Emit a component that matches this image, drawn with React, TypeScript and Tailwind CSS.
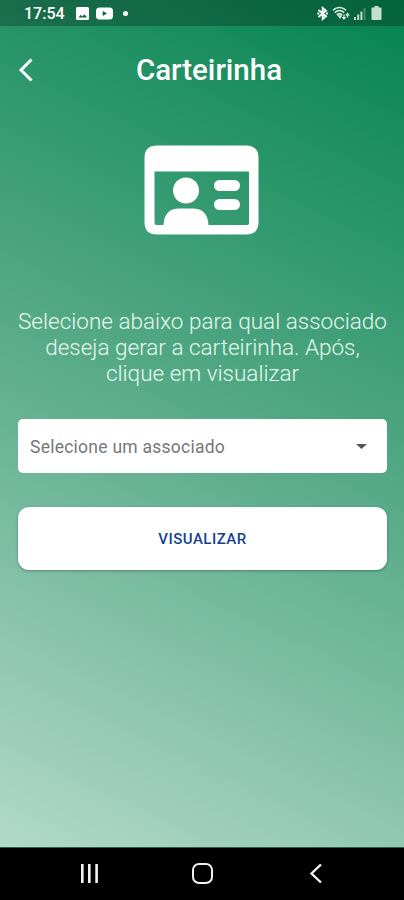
import { ReactNode } from 'react'

const StatusBar: React.FC = () => (
  <div className="flex h-[26px] shrink-0 items-center justify-between bg-black/25 pr-[22px] pl-6 text-white">
    <div className="flex items-center">
      <span className="w-[40px] pt-[2px] text-[16px] leading-none font-medium whitespace-nowrap">
        17:54
      </span>
      <svg className="ml-3 h-[13px] w-[13px]" viewBox="0 0 13 13">
        <rect width="13" height="13" rx="1.5" fill="#fff" />
        <path d="M2.500 10.500 4.800 7.800 6.300 9.500 8.500 7.200 11 10.500Z" fill="#14613f" />
      </svg>
      <svg className="ml-[7px] h-[13px] w-[17px]" viewBox="0 0 17 13">
        <rect y="0.5" width="17" height="12" rx="3.5" fill="#fff" />
        <path d="m6.7 4 4.3 2.5-4.3 2.5Z" fill="#14613f" />
      </svg>
      <span className="ml-[10px] h-[5px] w-[5px] rounded-full bg-white" />
    </div>

    <div className="flex items-center">
      <svg
        className="h-[15px] w-[12px]"
        viewBox="0 0 12 15"
        fill="none"
        stroke="#fff"
        strokeWidth="1.9"
      >
        <path d="m1.500 4 7.500 6.200L5.700 13V2L9 4.800 1.500 11" />
        <path d="M.3 7.500h2M9 7.500h2" />
      </svg>
      <svg
        className="mr-px ml-[3px] h-[15px] w-[18px]"
        viewBox="0 0 18 15"
        fill="none"
        stroke="#e3eee8"
        strokeWidth="1.600"
      >
        <path d="M1 4.200Q7.500-1.200 14 4.200M2.800 6.600Q7.500 2.400 12.200 6.600M4.800 8.900Q7.500 6.200 10.200 8.900" />
        <path d="m5.700 9.200 2.400 3.300 1.800-3Z" fill="#e3eee8" strokeWidth="0.500" />
        <path d="M12 8.500v3.500M15.500 11.500V8" strokeWidth="1.300" />
        <path d="M9.700 11h4.600L12 14ZM13.200 9.500h4.600l-2.300-3Z" fill="#e3eee8" stroke="none" />
      </svg>
      <svg className="mt-px ml-[2px] h-[13px] w-[14px]" viewBox="0 0 14 13">
        <path
          d="M1 10h2v3H1zM4.200 7.500h2V13h-2zM7.400 4.500h2V13h-2z"
          fill="#c4dace"
        />
        <path d="M10.600 1h2v12h-2z" fill="#4a8a6b" />
      </svg>
      <svg className="ml-[4px] h-[14px] w-[11px]" viewBox="0 0 11 14">
        <path
          d="M3.500 0h4v1.500H9.500Q10.500 1.500 10.500 2.500V13Q10.500 14 9.500 14h-8Q.5 14 .5 13V2.500Q.5 1.500 1.500 1.500h2Z"
          fill="#c4dfd0"
        />
      </svg>
    </div>
  </div>
)

const Header: React.FC = () => (
  <header className="grid h-[88px] shrink-0 grid-cols-[60px_1fr_46px] items-center text-white">
    <button className="ml-[16px] flex w-5 justify-center" aria-label="Voltar">
      <svg
        className="h-[24px] w-[16px]"
        viewBox="0 0 16 24"
        fill="none"
        stroke="currentColor"
        strokeWidth="3"
      >
        <path d="M13.500 1.500 3 12l10.500 10.500" />
      </svg>
    </button>
    <h1 className="pt-px text-center text-[29.500px] font-medium">Carteirinha</h1>
  </header>
)

const CardIcon: React.FC = () => (
  <svg
    className="mr-[2px] mt-[31px] h-[90px] w-[115px] shrink-0"
    viewBox="0 0 115 90"
    fill="#fff"
  >
    <path
      fillRule="evenodd"
      d="M13 .5h89Q114.500.5 114.500 13v64Q114.500 89.500 102 89.500H13Q.5 89.500 .5 77V13Q.5.5 13 .5ZM10.500 26.500V78Q10.500 80 12.500 80H19.500Q20.500 63.500 35 63.500H49Q63.500 63.500 64.500 80H103Q105 80 105 78V26.500Z"
    />
    <circle cx="42" cy="45.500" r="13" />
    <rect x="70" y="35" width="26" height="11" rx="5.500" />
    <rect x="70" y="54" width="26" height="11" rx="5.500" />
  </svg>
)

const Box = ({ children }: { children: ReactNode }) => (
  <button className="mt-[33px] flex h-[54px] w-full shrink-0 items-center justify-between rounded-[5px] bg-white pr-[20px] pl-[12px]">
    {children}
  </button>
)

const NavigationBar: React.FC = () => (
  <nav className="grid h-[53px] shrink-0 grid-cols-[113px_1fr_113px] place-items-center border-t border-[#315e4a] bg-black px-[33px]">
    <svg className="h-5 w-5" viewBox="0 0 20 20" fill="#f2f2f2">
      <path d="M1 0h2.600v19H1zM8 0h2.600v19H8zM15.300 0h2.600v19h-2.600z" />
    </svg>
    <span className="mb-px h-[21px] w-[21px] rounded-[7px] border-[2.500px] border-[#f2f2f2]" />
    <svg
      className="ml-[3px] h-5 w-[14px]"
      viewBox="0 0 14 20"
      fill="none"
      stroke="#f2f2f2"
      strokeWidth="2.400"
    >
      <path d="M12 .5 2.500 9.500 12 18.500" />
    </svg>
  </nav>
)

const App: React.FC = () => {
  return (
    <div className="flex h-[900px] w-[404px] flex-col overflow-hidden bg-black font-['Roboto',sans-serif]">
      <div className="flex flex-1 flex-col bg-[linear-gradient(205.500deg,#038350_0%,#59ab89_50%,#b2d9c9_100%)]">
        <StatusBar />
        <Header />

        <main className="flex flex-col items-center pr-[17px] pl-[18px]">
          <CardIcon />

          <p className="mt-[73px] text-center text-[22.500px] leading-[26px] font-light whitespace-nowrap text-[#e6f8ef]">
            Selecione abaixo para qual associado
            <br />
            deseja gerar a carteirinha. Após,
            <br />
            clique em visualizar
          </p>

          <Box>
            <span className="pt-[2px] text-[17.500px] tracking-[0.250px] text-[#777]">
              Selecione um associado
            </span>
            <svg className="h-[5px] w-[11px]" viewBox="0 0 11 5">
              <path d="M0 0h11L5.500 5Z" fill="#555" />
            </svg>
          </Box>

          <button className="mt-[34px] h-[63px] w-full shrink-0 rounded-[11px] bg-white pt-[2px] text-[15px] font-medium tracking-[0.500px] text-[#153f91] shadow-[0_1px_3px_rgba(0,0,0,0.300)]">
            VISUALIZAR
          </button>
        </main>
      </div>
      <NavigationBar />
    </div>
  )
}

export default App
